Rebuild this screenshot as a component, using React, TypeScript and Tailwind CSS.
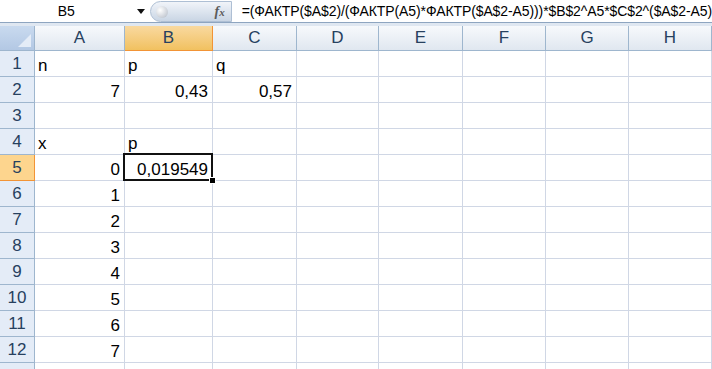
import React from "react";

type Cell = { t: string; n?: boolean };

const COLS = ["A", "B", "C", "D", "E", "F", "G", "H"];

const DATA: Cell[][] = [
  [{ t: "n" }, { t: "p" }, { t: "q" }],
  [
    { t: "7", n: true },
    { t: "0,43", n: true },
    { t: "0,57", n: true },
  ],
  [],
  [{ t: "x" }, { t: "p" }],
  [
    { t: "0", n: true },
    { t: "0,019549", n: true },
  ],
  [{ t: "1", n: true }],
  [{ t: "2", n: true }],
  [{ t: "3", n: true }],
  [{ t: "4", n: true }],
  [{ t: "5", n: true }],
  [{ t: "6", n: true }],
  [{ t: "7", n: true }],
  [],
];

const SEL_ROW = 5;
const SEL_COL = 1;

const FormulaBar = () => (
  <div className="flex h-[22px] items-center bg-white">
    <div className="flex w-[138px] justify-center pt-[1px] text-[14px] text-black">
      B5
    </div>
    <div className="flex w-[18px] justify-center">
      <svg width="8" height="5" viewBox="0 0 8 5">
        <path d="M0 0h8L4 5z" fill="#111" />
      </svg>
    </div>
    <div className="relative flex h-[21px] w-[85px] items-center justify-end rounded-l-full border border-[#aebfd4] bg-gradient-to-b from-[#f1f4f9] via-[#dde5ef] to-[#c9d5e4] pr-[6px]">
      <div className="absolute left-[5px] top-[4px] h-[12px] w-[12px] rounded-full bg-[radial-gradient(circle_at_35%_35%,#ffffff,#c9ced6_70%,#9aa3ae)]" />
      <span className="font-['Liberation_Serif'] text-[14px] font-bold italic text-[#5b5b5b]">
        f<span className="text-[11px]">x</span>
      </span>
    </div>
    <div className="flex-1 whitespace-nowrap pl-[10px] pt-[1px] text-[14px] tracking-[-0.1px] text-black">
      =(ФАКТР($A$2)/(ФАКТР(A5)*ФАКТР($A$2-A5)))*$B$2^A5*$C$2^($A$2-A5)
    </div>
  </div>
);

export default function App() {
  return (
    <div className="h-[369px] w-[712px] overflow-hidden bg-white font-['Liberation_Sans',Arial,sans-serif]">
      <FormulaBar />
      <div className="h-[1px] bg-[#8ea5c0]" />
      <div className="h-[3px] bg-[#dfe7f1]" />
      <div className="grid grid-cols-[35px_90px_88px_84px_82px_84px_83px_83px_83px]">
        <div className="relative h-[25px] border-b border-r border-[#9eb6ce] bg-gradient-to-b from-[#c9daef] to-[#b3c8e4]">
          <svg className="absolute bottom-[3px] right-[3px]" width="13" height="13" viewBox="0 0 13 13">
            <path d="M13 0V13H0z" fill="#e4ecf7" />
          </svg>
        </div>
        {COLS.map((c, i) => (
          <div
            key={c}
            className={
              i === SEL_COL
                ? "flex h-[25px] items-center justify-center border-b border-r border-[#f29436] bg-gradient-to-b from-[#f9d99f] to-[#f1c15f] text-[17px] text-[#27415f]"
                : "flex h-[25px] items-center justify-center border-b border-r border-[#9eb6ce] bg-gradient-to-b from-[#f7f9fc] to-[#e0e7f0] text-[17px] text-[#27415f]"
            }
          >
            {c}
          </div>
        ))}
        {DATA.map((row, r) => (
          <React.Fragment key={r}>
            <div
              className={
                r + 1 === SEL_ROW
                  ? "flex h-[26px] items-center justify-center border-b border-r border-[#f29436] bg-[#fdd58e] text-[17px] text-[#27415f]"
                  : "flex h-[26px] items-center justify-center border-b border-r border-[#9eb6ce] bg-[#e4ecf7] text-[17px] text-[#27415f]"
              }
            >
              {r < 12 ? r + 1 : ""}
            </div>
            {COLS.map((c, i) => {
              const cell = row[i];
              const sel = r + 1 === SEL_ROW && i === SEL_COL;
              return (
                <div
                  key={c}
                  className={
                    cell?.n
                      ? "relative flex h-[26px] items-end justify-end whitespace-nowrap border-b border-r border-[#d0d7e5] pb-[2px] pr-[4px] text-[17px] leading-[17px] text-black"
                      : "relative flex h-[26px] items-end justify-start whitespace-nowrap border-b border-r border-[#d0d7e5] pb-[2px] pl-[3px] text-[17px] leading-[17px] text-black"
                  }
                >
                  {cell?.t}
                  {sel && (
                    <>
                      <div className="absolute -bottom-[1px] -left-[2px] -right-[1px] -top-[2px] z-10 border-2 border-[#111]" />
                      <div className="absolute -bottom-[4px] -right-[4px] z-20 h-[7px] w-[7px] border border-white bg-black" />
                    </>
                  )}
                </div>
              );
            })}
          </React.Fragment>
        ))}
      </div>
    </div>
  );
}
